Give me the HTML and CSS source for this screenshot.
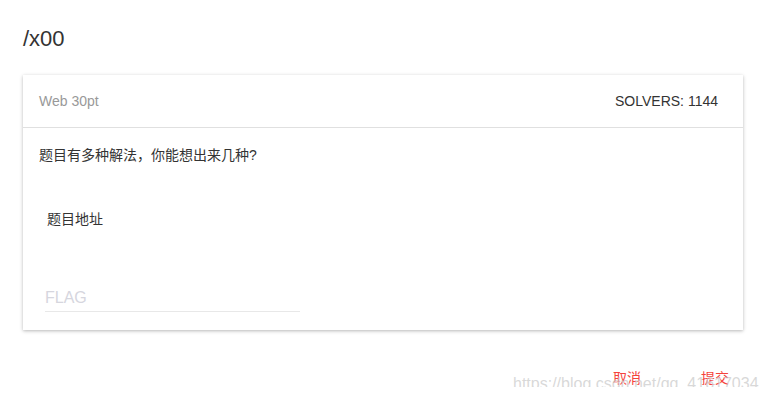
FILE: index.html
```html
<!DOCTYPE html>
<html lang="zh-CN">
<head>
	<meta charset="UTF-8">
	<title>/x00</title>
	<link rel="stylesheet" href="styles.css">
</head>
<body>
    <div class="page">
        <h2 class="title">/x00</h2>
        <div class="card">
            <div class="card-head">
                <span class="cat">Web 30pt</span>
                <span class="solvers">SOLVERS: 1144</span>
            </div>
            <div class="card-body">
                <p class="desc">题目有多种解法，你能想出来几种?</p>
                <a class="link">题目地址</a>
                <div class="field">
                    <input type="text" placeholder="FLAG">
                </div>
            </div>
        </div>
        <div class="actions">
            <button class="btn">取消</button>
            <button class="btn">提交</button>
        </div>
    </div>
    <div class="mark">https://blog.csdn.net/qq_41617034</div>
</body>
</html>
```

FILE: styles.css
```css
*{
    margin: 0;
    padding: 0;
    box-sizing: border-box;
}
body{
    width: 100%;
    height: 100%;
    background: #fff;
    font-family: "Liberation Sans", Arial, "Noto Sans CJK SC", sans-serif;
    color: #333;
    position: relative;
    overflow: hidden;
}
.page{
    padding: 26px 24px 0 23px;
}
.title{
    font-size: 22px;
    font-weight: normal;
    line-height: 26px;
    color: #333;
}
.card{
    margin-top: 23px;
    width: 720px;
    background: #fff;
    box-shadow: 0 1px 4px rgba(0,0,0,.22), 0 1px 2px rgba(0,0,0,.08);
}
.card-head{
    display: flex;
    justify-content: space-between;
    align-items: center;
    height: 53px;
    padding: 0 25px 0 16px;
    border-bottom: 1px solid #e0e0e0;
    font-size: 14px;
}
.cat{color: #999;}
.solvers{color: #333;}
.card-body{
    padding: 18px 16px 18px 16px;
    font-size: 14px;
}
.desc{
    line-height: 18px;
}
.link{
    display: block;
    margin: 46px 0 0 8px;
    line-height: 18px;
    color: #333;
}
.field{
    margin: 57px 0 0 6px;
    width: 255px;
    border-bottom: 1px solid #e8e8e8;
}
.field input{
    width: 100%;
    border: none;
    outline: none;
    height: 26px;
    font-size: 16px;
    font-family: "Liberation Sans", Arial, sans-serif;
    background: transparent;
}
.field input::placeholder{
    color: #d6d6de;
}
.actions{
    display: flex;
    justify-content: flex-end;
    gap: 60px;
    margin-top: 39px;
    padding-right: 14px;
}
.btn{
    border: none;
    background: none;
    font-size: 14px;
    font-family: "Liberation Sans", "Noto Sans CJK SC", sans-serif;
    color: #f5433c;
    line-height: 18px;
}
.mark{
    position: absolute;
    left: 513px;
    top: 375px;
    font-size: 16px;
    color: rgba(190,190,190,.6);
    text-shadow: 1px 1px 0 rgba(255,255,255,.7);
    white-space: nowrap;
}
```
